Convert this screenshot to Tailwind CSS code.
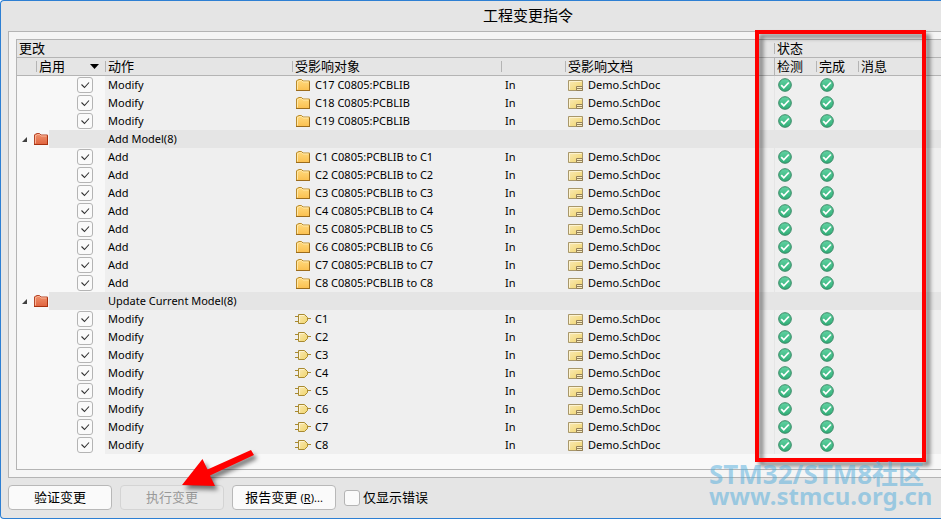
<!DOCTYPE html>
<html lang="zh-CN">
  <head>
    <meta charset="UTF-8" />
    <meta name="viewport" content="width=device-width, initial-scale=1.0" />
    <title>工程变更指令</title>
    <script src="https://cdn.jsdelivr.net/npm/@tailwindcss/browser@4"></script>
  </head>
  <body class="bg-white font-['Noto_Sans','Noto_Sans_CJK_SC',sans-serif] text-[11px] text-black">
    <!-- Shared icons -->
    <svg class="absolute h-0 w-0" xmlns="http://www.w3.org/2000/svg" aria-hidden="true">
      <defs>
        <linearGradient id="yellow" x1="0" y1="0" x2="0" y2="1">
          <stop offset="0" stop-color="#ffda80" />
          <stop offset="1" stop-color="#fbc04f" />
        </linearGradient>
        <linearGradient id="red" x1="0" y1="0" x2="0" y2="1">
          <stop offset="0" stop-color="#f09470" />
          <stop offset="1" stop-color="#e0643f" />
        </linearGradient>
        <linearGradient id="cream" x1="0" y1="0" x2="1" y2="1">
          <stop offset="0" stop-color="#faeab8" />
          <stop offset="1" stop-color="#f0d468" />
        </linearGradient>
        <linearGradient id="green" x1="0" y1="0" x2="0" y2="1">
          <stop offset="0" stop-color="#62d3a3" />
          <stop offset="1" stop-color="#2fae77" />
        </linearGradient>
      </defs>
      <symbol id="folder" viewBox="0 0 14 12">
        <path d="M.5 11.500V2L1.500 1h.5L3 .5h2.500L7 2h6.500v9.500z" fill="url(#yellow)" stroke="#b98a2a" />
        <path d="M1.500 10.500v-8h1l1-1h2L7 3h5.500" fill="none" stroke="#ffe7a6" />
        <path d="M0 11.500h14M13.500 11V3" stroke="#9c6c1c" fill="none" />
      </symbol>
      <symbol id="folder-red" viewBox="0 0 14 12">
        <path d="M.5 11.500V2L1.500 1h.5L3 .5h2.500L7 2h6.500v9.500z" fill="url(#red)" stroke="#b5462a" />
        <path d="M1.500 10.500v-8h1l1-1h2L7 3h5.500" fill="none" stroke="#f8b496" />
        <path d="M0 11.500h14M13.500 11V3" stroke="#a83210" fill="none" />
      </symbol>
      <symbol id="sheet" viewBox="0 0 15 11">
        <path d="M.5.5h14v10H.5z" fill="url(#cream)" stroke="#a8976a" />
        <path d="M1.500 9.500v-8h12" fill="none" stroke="#fdf3cf" />
        <path d="M8.500 10.500v-4h6v4zM8.500 8.500h6" fill="#f7ebbd" stroke="#94815a" />
      </symbol>
      <symbol id="gate" viewBox="0 0 16 10">
        <path d="M0 2.500h4M0 7.500h4M12 4.500h4" stroke="#a88a32" fill="none" />
        <path d="M3.500.5h6l3 3v3l-3 3h-6z" fill="url(#cream)" stroke="#a88a32" />
        <path d="M4.500 8.500v-7h4.500" fill="none" stroke="#fdf3cf" />
      </symbol>
      <symbol id="ok" viewBox="0 0 14 14">
        <circle cx="7" cy="7" r="6.300" fill="url(#green)" stroke="#3a8865" />
        <path d="M3.200 7.200l2.600 2.600 5-5.300" fill="none" stroke="#fff" stroke-width="1.800" />
      </symbol>
    </svg>

    <div class="relative min-h-screen overflow-hidden rounded-l border-y border-l border-[#2d7fd3] bg-[#e5e5e5]">
      <h1 class="flex h-[30px] items-center justify-center pb-[2px] pl-[114px] text-[15px]">工程变更指令</h1>

      <main class="ml-[7px] border-y border-l border-[#b4b4b4] bg-[#f5f5f5] py-[7px] pl-[7px]">
        <div class="border-y border-l border-[#b4b4b4] bg-[#f8f8f8] pb-[15px]">
          <table class="w-full table-fixed border-separate border-spacing-0">
            <colgroup>
              <col class="w-[32px]" />
              <col class="w-[56px]" />
              <col class="w-[187px]" />
              <col class="w-[209px]" />
              <col class="w-[64px]" />
              <col class="w-[209px]" />
              <col class="w-[42px]" />
              <col class="w-[42px]" />
              <col />
            </colgroup>
            <thead class="bg-[#e5e5e5] text-left text-[13px] leading-[17px]">
              <tr>
                <th colspan="6" class="h-[18px] border-b border-[#b4b4b4] p-0 pl-[2px] font-normal">更改</th>
                <th colspan="3" class="h-[18px] border-b border-[#b4b4b4] p-0 font-normal">
                  <div class="flex items-center gap-[2px]"><i class="h-[11px] w-px bg-[#b4b4b4]"></i>状态</div>
                </th>
              </tr>
              <tr>
                <th colspan="2" class="h-[18px] border-b border-[#b4b4b4] p-0 pl-[19px] font-normal">
                  <div class="flex items-center gap-[2px] pr-[6px]">
                    <i class="h-[11px] w-px bg-[#b4b4b4]"></i>启用
                    <svg class="ml-auto h-[5px] w-[9px]" viewBox="0 0 9 5"><path d="M0 0h9L4.500 5z" /></svg>
                  </div>
                </th>
                <th class="border-b border-[#b4b4b4] p-0 font-normal">
                  <div class="flex items-center gap-[2px]"><i class="h-[11px] w-px bg-[#b4b4b4]"></i>动作</div>
                </th>
                <th class="border-b border-[#b4b4b4] p-0 font-normal">
                  <div class="flex items-center gap-[2px]"><i class="h-[11px] w-px bg-[#b4b4b4]"></i>受影响对象</div>
                </th>
                <th class="border-b border-[#b4b4b4] p-0 font-normal">
                  <div class="flex items-center"><i class="h-[11px] w-px bg-[#b4b4b4]"></i></div>
                </th>
                <th class="border-b border-[#b4b4b4] p-0 font-normal">
                  <div class="flex items-center gap-[2px]"><i class="h-[11px] w-px bg-[#b4b4b4]"></i>受影响文档</div>
                </th>
                <th class="border-b border-l border-[#b4b4b4] p-0 pl-[2px] font-normal">检测</th>
                <th class="border-b border-[#b4b4b4] p-0 font-normal">
                  <div class="flex items-center gap-[2px]"><i class="h-[11px] w-px bg-[#b4b4b4]"></i>完成</div>
                </th>
                <th class="border-b border-[#b4b4b4] p-0 font-normal">
                  <div class="flex items-center gap-[2px]"><i class="h-[11px] w-px bg-[#b4b4b4]"></i>消息</div>
                </th>
              </tr>
            </thead>
            <tbody id="changes" class="bg-[#efefef] leading-[18px]"></tbody>
          </table>
        </div>
      </main>

      <footer class="flex items-center gap-2 px-[7px] py-[7px] text-[13px]">
        <button class="h-[25px] w-[104px] rounded border border-[#b8b8b8] bg-[#fafafa]">验证变更</button>
        <button class="h-[25px] w-[104px] rounded border border-[#d4d4d4] bg-[#e9e9e9] text-[#999]" disabled>执行变更</button>
        <button class="h-[25px] w-[104px] rounded border border-[#b8b8b8] bg-[#fafafa]">
          报告变更 <span class="text-[11px]">(<u>R</u>)...</span>
        </button>
        <label class="flex items-center gap-[3px]">
          <input type="checkbox" class="h-4 w-4 appearance-none rounded-[3px] border border-[#b4b4b4] bg-[#fafafa]" />
          仅显示错误
        </label>
      </footer>

      <!-- Annotations over the dialog -->
      <div class="pointer-events-none absolute top-[29px] left-[754px] h-[432px] w-[171px] border-4 border-[#f00] drop-shadow-[4px_4px_2px_rgba(0,0,0,0.5)]"></div>
      <svg class="pointer-events-none absolute top-[444px] left-[174px] h-[50px] w-[90px] drop-shadow-[3px_4px_2px_rgba(0,0,0,0.5)]" viewBox="175 445 90 50">
        <path d="M182 485L202.500 459L207.500 469.500L251 450L254 455L210 475.500L215 486z" fill="#f00" />
      </svg>
      <div class="pointer-events-none absolute top-[462px] left-[708px] font-bold whitespace-nowrap text-[#50acdc]/50">
        <p class="text-[26px] leading-[22px]">STM32/STM8社区</p>
        <p class="text-[24px] leading-[22px]">www.stmcu.org.cn</p>
      </div>
    </div>

    <script>
      const numbers = [1, 2, 3, 4, 5, 6, 7, 8];
      const groups = [
        { action: 'Modify', icon: 'folder', items: ['C17', 'C18', 'C19'].map((c) => `${c} C0805:PCBLIB`) },
        { title: 'Add Model(8)', action: 'Add', icon: 'folder', items: numbers.map((n) => `C${n} C0805:PCBLIB to C${n}`) },
        { title: 'Update Current Model(8)', action: 'Modify', icon: 'gate', items: numbers.map((n) => `C${n}`) },
      ];
      const icons = {
        folder: '<svg class="ml-[4px] mr-[5px] h-[12px] w-[14px]"><use href="#folder" /></svg>',
        gate: '<svg class="ml-[3px] mr-[4px] h-[10px] w-[16px]"><use href="#gate" /></svg>',
      };
      const ok = '<svg class="h-[14px] w-[14px]" role="img" aria-label="OK"><use href="#ok" /></svg>';

      const groupRow = (title) => `
        <tr>
          <td class="h-[18px] bg-[#f8f8f8] p-0">
            <div class="flex items-center justify-end gap-[7px] pr-px">
              <svg class="h-[5px] w-[5px]" viewBox="0 0 5 5"><path d="M5 0v5H0z" fill="#404040" /></svg>
              <svg class="h-[12px] w-[14px]"><use href="#folder-red" /></svg>
            </div>
          </td>
          <td class="bg-[#e5e5e5] p-0"></td>
          <td colspan="7" class="bg-[#e5e5e5] p-0 pl-[3px]">${title}</td>
        </tr>`;

      const itemRow = (group, item) => `
        <tr>
          <td class="h-[18px] bg-[#f8f8f8] p-0"></td>
          <td class="bg-[#f8f8f8] p-0 pl-[28px]">
            <label class="relative block h-4 w-4">
              <input type="checkbox" checked aria-label="${group.action} ${item}"
                class="block h-4 w-4 appearance-none rounded-[3px] border border-[#b4b4b4] bg-[#fafafa]" />
              <svg class="pointer-events-none absolute inset-0 h-4 w-4" viewBox="0 0 16 16">
                <path d="M4.500 7.500l3 3 4.500-5" fill="none" stroke="#333" stroke-width="1.100" />
              </svg>
            </label>
          </td>
          <td class="p-0 pl-[3px]">${group.action}</td>
          <td class="p-0"><div class="flex items-center">${icons[group.icon]}${item}</div></td>
          <td class="p-0 pl-[4px]">In</td>
          <td class="p-0">
            <div class="flex items-center gap-[5px] pl-[3px]">
              <svg class="h-[11px] w-[15px]"><use href="#sheet" /></svg>Demo.SchDoc
            </div>
          </td>
          <td class="border-l border-[#e5e5e5] p-0 pl-[3px]">${ok}</td>
          <td class="p-0 pl-[4px]">${ok}</td>
          <td class="p-0"></td>
        </tr>`;

      document.getElementById('changes').innerHTML = groups
        .map((group) => (group.title ? groupRow(group.title) : '') + group.items.map((item) => itemRow(group, item)).join(''))
        .join('');
    </script>
  </body>
</html>
